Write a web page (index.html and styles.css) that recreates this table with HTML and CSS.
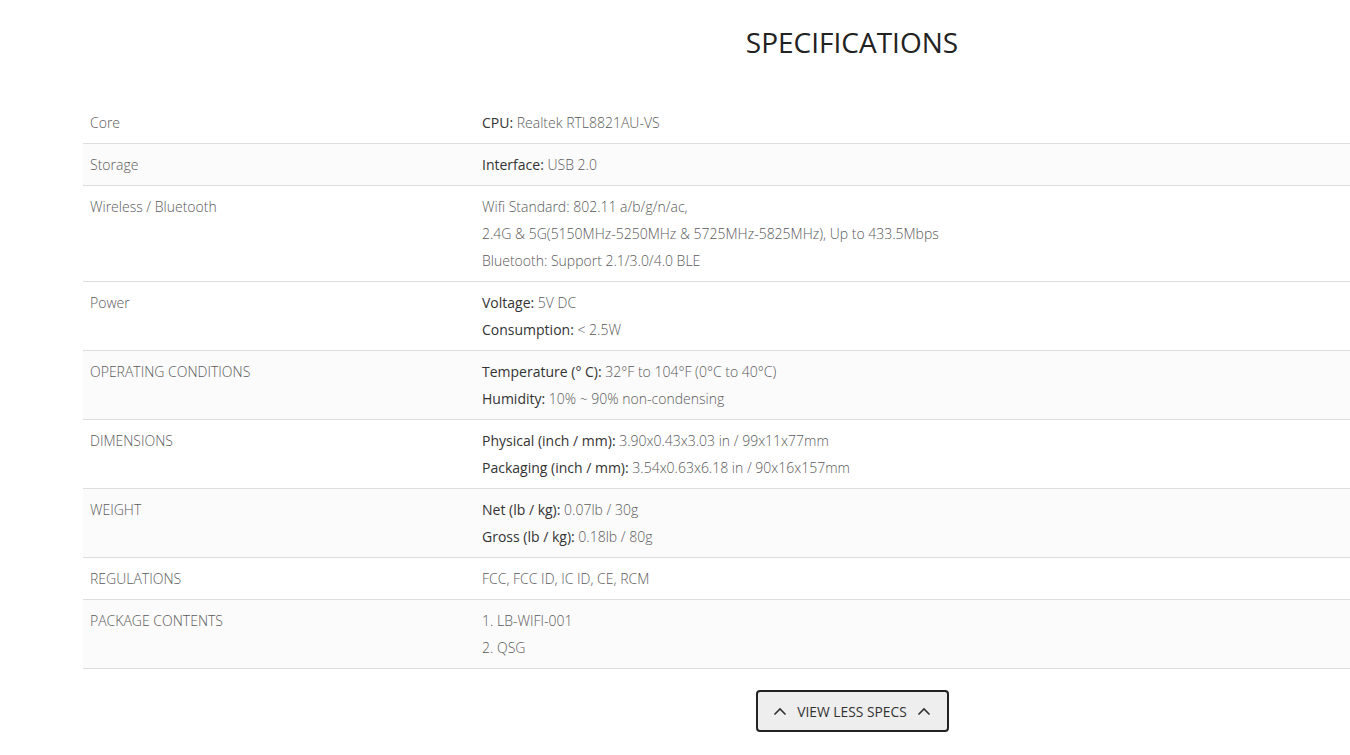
FILE: index.html
```html
<!DOCTYPE html>
<html>
<head>
<meta charset="utf-8">
<link rel="stylesheet" href="styles.css">
</head>
<body>
<div class="page">
  <div class="specs">
    <h2 class="title">SPECIFICATIONS</h2>
    <table class="spec-table">
      <tr>
        <td class="label">Core</td>
        <td class="value"><div><b>CPU:</b> Realtek RTL8821AU-VS</div></td>
      </tr>
      <tr class="shade">
        <td class="label">Storage</td>
        <td class="value"><div><b>Interface:</b> USB 2.0</div></td>
      </tr>
      <tr>
        <td class="label">Wireless / Bluetooth</td>
        <td class="value">
          <div>Wifi Standard: 802.11 a/b/g/n/ac,</div>
          <div>2.4G &amp; 5G(5150MHz-5250MHz &amp; 5725MHz-5825MHz), Up to 433.5Mbps</div>
          <div>Bluetooth: Support 2.1/3.0/4.0 BLE</div>
        </td>
      </tr>
      <tr>
        <td class="label">Power</td>
        <td class="value">
          <div><b>Voltage:</b> 5V DC</div>
          <div><b>Consumption:</b> &lt; 2.5W</div>
        </td>
      </tr>
      <tr class="shade">
        <td class="label">OPERATING CONDITIONS</td>
        <td class="value">
          <div><b>Temperature (° C):</b> 32°F to 104°F (0°C to 40°C)</div>
          <div><b>Humidity:</b> 10% ~ 90% non-condensing</div>
        </td>
      </tr>
      <tr>
        <td class="label">DIMENSIONS</td>
        <td class="value">
          <div><b>Physical (inch / mm):</b> 3.90x0.43x3.03 in / 99x11x77mm</div>
          <div><b>Packaging (inch / mm):</b> 3.54x0.63x6.18 in / 90x16x157mm</div>
        </td>
      </tr>
      <tr class="shade">
        <td class="label">WEIGHT</td>
        <td class="value">
          <div><b>Net (lb / kg):</b> 0.07lb / 30g</div>
          <div><b>Gross (lb / kg):</b> 0.18lb / 80g</div>
        </td>
      </tr>
      <tr>
        <td class="label">REGULATIONS</td>
        <td class="value"><div>FCC, FCC ID, IC ID, CE, RCM</div></td>
      </tr>
      <tr class="shade">
        <td class="label">PACKAGE CONTENTS</td>
        <td class="value">
          <div>1. LB-WIFI-001</div>
          <div>2. QSG</div>
        </td>
      </tr>
    </table>
    <div class="btn-row">
      <button class="toggle-btn">
        <svg class="chev" width="14" height="9" viewBox="0 0 14 9"><path d="M1.5 7.5 L7 2 L12.5 7.5" fill="none" stroke="#333" stroke-width="1.6"/></svg>
        <span>VIEW LESS SPECS</span>
        <svg class="chev" width="14" height="9" viewBox="0 0 14 9"><path d="M1.5 7.5 L7 2 L12.5 7.5" fill="none" stroke="#333" stroke-width="1.6"/></svg>
      </button>
    </div>
  </div>
</div>
</body>
</html>
```
FILE: styles.css
```css
html, body {
  margin: 0;
  padding: 0;
  background: #fff;
  overflow: hidden;
}
body {
  font-family: "Open Sans", "Liberation Sans", sans-serif;
  width: 1350px;
  height: 755px;
}
.page {
  width: 1350px;
  height: 755px;
  overflow: hidden;
  padding-left: 83px;
  box-sizing: border-box;
}
.specs {
  width: 1538px;
}
.title {
  margin: 22px 0 40px;
  font-size: 28px;
  line-height: 40px;
  font-weight: 400;
  color: #222;
  text-align: center;
}
.spec-table {
  width: 100%;
  border-collapse: collapse;
  font-size: 14px;
  line-height: 27px;
  color: #5a5a5a;
  font-weight: 300;
}
.spec-table tr {
  border-bottom: 1px solid #ddd;
}
.spec-table tr.shade {
  background: #fbfbfb;
}
.spec-table td {
  padding: 7px 7px 7px;
  vertical-align: top;
}
.spec-table td.label {
  width: 378px;
}
.spec-table b {
  font-weight: 400;
  color: #333;
}
.btn-row {
  display: flex;
  justify-content: center;
  margin-top: 21px;
}
.toggle-btn {
  display: flex;
  align-items: center;
  gap: 10px;
  height: 42px;
  width: 193px;
  justify-content: center;
  border: 2px solid #222;
  border-radius: 4px;
  background: #eee;
  font-family: "Open Sans", "Liberation Sans", sans-serif;
  font-size: 13.8px;
  color: #333;
  font-weight: 400;
  padding: 0;
}
.chev {
  display: block;
}
```
